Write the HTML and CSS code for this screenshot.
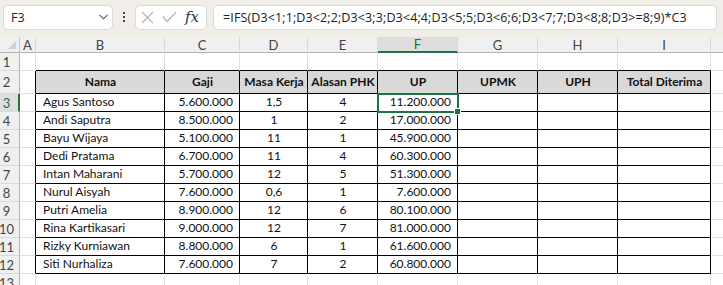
FILE: index.html
```html
<!DOCTYPE html>
<html lang="en">

<head>
    <meta charset="UTF-8">
    <meta name="viewport" content="width=device-width, initial-scale=1.0">
    <title>Pesangon</title>
    <link rel="stylesheet" href="styles.css">
</head>

<body>
    <div id="toolbar">
        <div class="namebox">
            <span>F3</span>
            <svg class="chev" width="9" height="6" viewBox="0 0 9 6"><path d="M0.5 0.8 L4.5 4.8 L8.5 0.8" fill="none" stroke="#555" stroke-width="1.1"/></svg>
        </div>
        <div class="dots"><i></i><i></i><i></i></div>
        <div class="fxbox">
            <svg width="13" height="13" viewBox="0 0 13 13"><path d="M1 1 L12 12 M12 1 L1 12" stroke="#b4b4b4" stroke-width="1.2"/></svg>
            <svg width="15" height="12" viewBox="0 0 15 12"><path d="M0.8 5.5 L5 10.5 L14.2 0.8" fill="none" stroke="#b4b4b4" stroke-width="1.2"/></svg>
            <span class="fx">fx</span>
        </div>
        <div class="formula">=IFS(D3&lt;1;1;D3&lt;2;2;D3&lt;3;3;D3&lt;4;4;D3&lt;5;5;D3&lt;6;6;D3&lt;7;7;D3&lt;8;8;D3&gt;=8;9)*C3</div>
    </div>
    <div id="sheet"></div>
    <script>
        const sheet = document.querySelector("#sheet");
        // J is only partly visible, its letter falls outside the window
        const letters = ["A", "B", "C", "D", "E", "F", "G", "H", "I", ""];
        const heads = ["Nama", "Gaji", "Masa Kerja", "Alasan PHK", "UP", "UPMK", "UPH", "Total Diterima"];
        const rows = [
            ["Agus Santoso", "5.600.000", "1,5", "4", "11.200.000"],
            ["Andi Saputra", "8.500.000", "1", "2", "17.000.000"],
            ["Bayu Wijaya", "5.100.000", "11", "1", "45.900.000"],
            ["Dedi Pratama", "6.700.000", "11", "4", "60.300.000"],
            ["Intan Maharani", "5.700.000", "12", "5", "51.300.000"],
            ["Nurul Aisyah", "7.600.000", "0,6", "1", "7.600.000"],
            ["Putri Amelia", "8.900.000", "12", "6", "80.100.000"],
            ["Rina Kartikasari", "9.000.000", "12", "7", "81.000.000"],
            ["Rizky Kurniawan", "8.800.000", "6", "1", "61.600.000"],
            ["Siti Nurhaliza", "7.600.000", "7", "2", "60.800.000"],
        ];
        // how each table column is aligned (B..I)
        const align = ["left", "num", "ctr", "ctr", "num", "", "", ""];

        function add(cls, text) {
            const el = document.createElement("div");
            el.className = cls;
            if (text) el.textContent = text;
            sheet.appendChild(el);
            return el;
        }

        // column headers
        add("corner");
        letters.forEach(l => add(l == "F" ? "colhdr sel" : "colhdr", l));

        for (let r = 1; r <= 13; r++) {
            add(r == 3 ? "rowhdr sel" : "rowhdr", r);
            for (let c = 0; c < letters.length; c++) {
                let cls = "cell";
                let text = "";
                const inTable = c >= 1 && c <= 8;
                if (c == 0 && r >= 2 && r <= 12) cls += " tl";
                if (r == 1 && inTable) cls += " tt";
                if (r == 2 && inTable) {
                    cls += " tab th";
                    text = heads[c - 1];
                }
                if (r >= 3 && r <= 12 && inTable) {
                    cls += " tab " + align[c - 1];
                    text = rows[r - 3][c - 1] || "";
                }
                if (r == 3 && c == 5) cls += " active";
                add(cls, text);
            }
        }
    </script>
</body>

</html>
```

FILE: styles.css
```css
body {
    margin: 0;
    padding: 0;
    width: 723px;
    height: 285px;
    overflow: hidden;
    background: #fff;
    font-family: Lato, "Open Sans", sans-serif;
}

#toolbar {
    height: 37px;
    box-sizing: border-box;
    background: #f1eeea;
    display: flex;
    align-items: center;
    padding: 0 6px 3px 3px;
}

.namebox,
.fxbox,
.formula {
    height: 25px;
    box-sizing: border-box;
    background: #fff;
    border: 1px solid #dcdad7;
    border-radius: 5px;
    display: flex;
    align-items: center;
}

.namebox {
    width: 110px;
    padding: 0 4px 0 7px;
    justify-content: space-between;
    font-family: "Open Sans", sans-serif;
    font-size: 12.5px;
    color: #222;
}

.dots {
    width: 22px;
    display: flex;
    flex-direction: column;
    align-items: center;
    gap: 2px;
}

.dots i {
    width: 2px;
    height: 2px;
    background: #444;
}

.fxbox {
    width: 72px;
    padding: 0 5px 0 5px;
    justify-content: space-between;
}

.fx {
    font-family: "DejaVu Serif", serif;
    font-style: italic;
    font-size: 15px;
    color: #333;
    padding-right: 2px;
}

.formula {
    flex: 1;
    margin-left: 6px;
    padding-left: 9px;
    font-family: "Open Sans", sans-serif;
    font-size: 12.5px;
    letter-spacing: 0.12px;
    color: #222;
    white-space: nowrap;
    overflow: hidden;
}

#sheet {
    display: grid;
    grid-template-columns: 20px 16px 129px 75px 68px 70px 80px 80px 80px 93px 100px;
    grid-template-rows: 16px 18px 23px repeat(10, 18px) 18px;
    font-size: 12px;
    color: #111;
}

.corner,
.colhdr,
.rowhdr {
    background: #f0f0f0;
    color: #444;
    box-sizing: border-box;
    display: flex;
    align-items: center;
    justify-content: center;
    font-size: 13px;
}

.corner {
    border-right: 1px solid #c8c8c8;
    border-bottom: 1px solid #b4b4b4;
    position: relative;
}

.corner::after {
    content: "";
    position: absolute;
    right: 3px;
    bottom: 3px;
    border-left: 8px solid transparent;
    border-bottom: 8px solid #d0d0d0;
}

.colhdr {
    border-right: 1px solid #dadada;
    border-bottom: 1px solid #b4b4b4;
}

.rowhdr {
    border-right: 1px solid #b4b4b4;
    border-bottom: 1px solid #dadada;
    padding-right: 6px;
}

.colhdr.sel {
    background: #dedede;
    color: #217346;
    border-bottom: 2px solid #217346;
}

.rowhdr.sel {
    background: #dedede;
    color: #217346;
    border-right: 2px solid #217346;
    padding-right: 5px;
}

.cell {
    box-sizing: border-box;
    border-right: 1px solid #e1e1e1;
    border-bottom: 1px solid #e1e1e1;
    display: flex;
    align-items: flex-end;
    padding: 0 6px 2px 7px;
    white-space: nowrap;
}

.cell.tl {
    border-right-color: #000;
}

.cell.tt {
    border-bottom-color: #000;
}

.cell.tab {
    border-right-color: #000;
    border-bottom-color: #000;
}

.th {
    background: #d9d9d9;
    font-weight: bold;
    justify-content: center;
    padding-bottom: 4px;
}

.num {
    justify-content: flex-end;
}

.ctr {
    justify-content: center;
}

.active {
    position: relative;
    z-index: 1;
    outline: 2px solid #217346;
    outline-offset: -1px;
}

.active::after {
    content: "";
    position: absolute;
    right: -4px;
    bottom: -4px;
    width: 5px;
    height: 5px;
    background: #217346;
    border: 1px solid #fff;
}
```
